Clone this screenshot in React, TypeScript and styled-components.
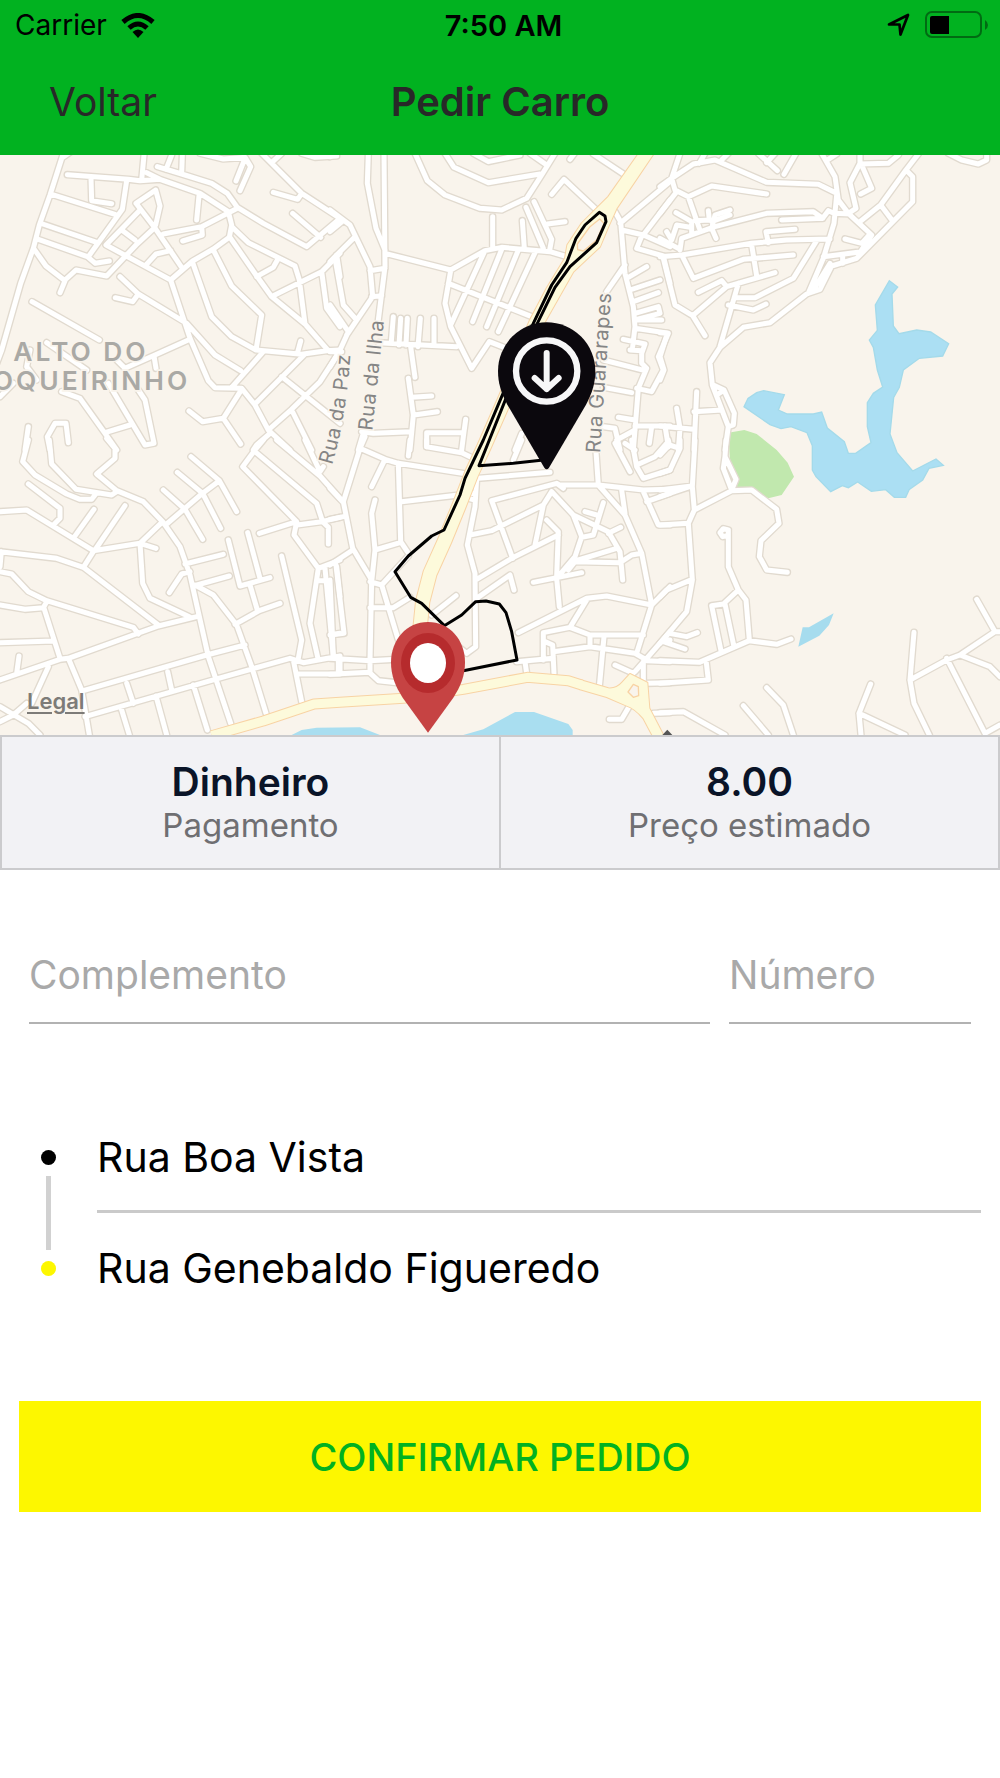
import React from "react";
import styled, { createGlobalStyle } from "styled-components";

const GlobalStyle = createGlobalStyle`
  *, *::before, *::after { box-sizing: border-box; }
  body {
    margin: 0;
    background: #fff;
    color: #000;
    font-family: Inter, "Liberation Sans", sans-serif;
  }
  button, input { font-family: inherit; }
`;

const Screen = styled.div`
  display: flex;
  flex-direction: column;
  min-height: 100vh;
`;

const Header = styled.header`
  background: #01b220;
`;

const StatusBar = styled.div`
  display: grid;
  grid-template-columns: 1fr auto 1fr;
  align-items: center;
  height: 50px;
  padding: 0 12px 0 15px;
  font-size: 28px;
`;

const StatusGroup = styled.div<{ $end?: boolean }>`
  display: flex;
  align-items: center;
  justify-content: ${(p) => (p.$end ? "flex-end" : "flex-start")};
  gap: 14px;
`;

const Clock = styled.time`
  padding-left: 4px;
  font-size: 29px;
  font-weight: 600;
`;

const NavBar = styled.nav`
  display: grid;
  grid-template-columns: 1fr auto 1fr;
  align-items: center;
  height: 105px;
  padding: 0 49px 2px;
  color: #282828;
`;

const BackButton = styled.button`
  justify-self: start;
  padding: 0;
  border: 0;
  background: none;
  color: inherit;
  font-size: 39px;
  line-height: 48px;
`;

const Title = styled.h1`
  margin: 0;
  font-size: 40px;
  font-weight: 600;
  line-height: 48px;
`;

const MapPanel = styled.section`
  position: relative;
  height: 580px;
  overflow: hidden;
  background: #f9f4ec;
`;

const MapSvg = styled.svg`
  display: block;
  width: 100%;
  height: 100%;
`;

const LegalLink = styled.a`
  position: absolute;
  left: 27px;
  bottom: 20px;
  color: #7d7b78;
  font-size: 22px;
  font-weight: 600;
  line-height: 28px;
  text-decoration: underline;
  text-underline-offset: 3px;
`;

const Summary = styled.dl`
  display: grid;
  grid-template-columns: 1fr 1fr;
  gap: 2px;
  margin: 0;
  border: 2px solid #cbcbcd;
  background: #cbcbcd;
`;

const SummaryItem = styled.div`
  display: flex;
  flex-direction: column-reverse;
  align-items: center;
  padding: 23px 16px 22px;
  background: #f2f2f5;
`;

const SummaryLabel = styled.dt`
  color: #6f6f72;
  font-size: 33px;
  line-height: 42px;
`;

const SummaryValue = styled.dd`
  margin: 0;
  color: #0a1428;
  font-size: 39px;
  font-weight: 600;
  line-height: 44px;
`;

const Form = styled.form`
  display: flex;
  flex-direction: column;
`;

const Fields = styled.div`
  display: grid;
  grid-template-columns: 681fr 242fr;
  gap: 19px;
  padding: 56px 29px 0;
`;

const TextInput = styled.input`
  display: block;
  width: 100%;
  height: 98px;
  padding: 0;
  border: 0;
  border-bottom: 2px solid #b2b2b2;
  border-radius: 0;
  outline: 0;
  background: transparent;
  color: #000;
  font-size: 39px;
  &::placeholder { color: #a9a9a9; opacity: 1; }
`;

const Route = styled.ol`
  display: grid;
  grid-template-columns: 97px 1fr;
  margin: 78px 19px 0 0;
  padding: 0;
  list-style: none;
`;

const Stop = styled.li`
  display: contents;
`;

const Marker = styled.span<{ $color: string; $link?: boolean }>`
  display: flex;
  flex-direction: column;
  align-items: center;
  padding-top: 48px;
  gap: 11px;
  &::before {
    content: "";
    flex: none;
    width: 15px;
    height: 15px;
    border-radius: 50%;
    background: ${(p) => p.$color};
  }
  &::after {
    content: "";
    display: ${(p) => (p.$link ? "block" : "none")};
    flex: none;
    width: 5px;
    height: 74px;
    margin-bottom: -38px;
    background: #d1d1d1;
  }
`;

const Street = styled.span<{ $divided?: boolean }>`
  height: 111px;
  border-bottom: ${(p) => (p.$divided ? "3px solid #cacaca" : "0")};
  font-size: 41px;
  line-height: 111px;
`;

const ConfirmButton = styled.button`
  height: 111px;
  margin: 77px 19px 0;
  border: 0;
  background: #fdf700;
  color: #01b220;
  font-size: 38px;
  font-weight: 500;
`;

/* Every map sheet is drawn in its own grid and placed by its origin. */
type Sheet = { x: number; y: number; roads: string };

const sheets: Sheet[] = [
  {
    x: 0,
    y: -15,
    roads: `M190 10L150 135L118 225L100 295L62 400L5 600L-10 640M188 22L220 0
M202 74L385 88L420 92L480 88L600 130L685 185M273 85L275 152L335 161M380 92L367 178L265 320
M155 133L345 193M128 222L290 277M115 268L262 320L286 340L328 333M103 298L138 348L195 392L180 428
M195 390L228 360L320 378L408 285L465 232M432 15L425 90M440 68L480 88
M472 50L545 72L635 100L682 130L712 172M515 15L498 58M547 15L545 70
M418 182L318 285L512 390L578 333L640 297L688 262L695 225L685 185
M467 225L480 168L467 120L408 160L462 230L545 352M368 242L405 270M435 348L468 312L512 302
M490 252L605 230L712 175M605 230L607 255L548 273M597 137L590 210
M600 10L670 27L735 22L752 50L720 122M735 25L708 93M712 172L790 220L920 290L1020 205
M785 10L905 130L1020 205M815 38L845 10M820 127L893 148L905 130M878 190L962 262M905 10L945 22L1010 18
M695 230L745 278L885 348L898 390L915 522M690 262L768 375L815 440L915 522L985 602M770 380L820 352L835 325
M820 437L965 365L1020 310M965 365L980 475L1020 530M1010 315L1020 380
M512 390L570 565L625 692L645 713L725 715L765 765L805 840L870 900
M578 338L635 500L695 560L768 600L905 613L980 602L1020 600M640 300L695 408L785 495L768 600
M360 380L415 432L560 520L645 615L722 662M346 443L398 455L415 432M96 455L298 570
M570 568L465 615L375 655L350 630M462 618L468 655M790 605L695 712M892 610L902 573M912 615L765 762
M725 718L670 805L608 815L567 783M670 805L722 882M845 680L1020 820
M1015 610L960 695L875 778L805 840M875 780L935 900M810 850L770 885L760 900
M185 725L240 745L315 850L350 900M315 848L390 825M325 700L435 885L462 880L435 750L415 720
M85 830L75 900M150 900L142 860L165 820L198 820L205 878M0 740L40 700M90 600L80 650L110 690M140 578L260 660`,
  },
  {
    x: 990,
    y: -15,
    roads: `M0 20L20 10M115 10L112 100L138 235L165 300M162 10L165 350L145 510
M255 10L292 92L345 135L450 175L515 180L590 145L635 75L675 10M345 10L372 52L475 98L630 72
M430 10L475 35L570 15M600 10L650 45M720 28L732 12M790 12L885 75M665 133L702 88L800 180
M165 310L362 360L465 302L515 292L660 305L710 320M488 200L488 295M577 212L583 295M588 172L640 295
M612 155L665 268L658 305M652 222L705 215M362 362L345 460L362 530L425 655L478 575L530 595
M355 400L605 500M462 308L362 525M515 298L428 515M565 300L470 530M615 308L505 545
M145 578L380 590M190 500L184 575M212 505L207 585M232 505L228 585M271 505L264 590M312 505L312 582
M242 590L255 682M235 685L250 795L240 900M245 742L305 738M252 795L322 785M95 845L130 850L245 845M100 850L85 900
M290 890L290 848L400 848M407 808L400 860L395 900M0 180L60 225L120 350L128 440L50 555
M0 245L40 212M75 260L0 335M120 362L165 355M125 440L155 437M15 325L40 465L80 510
M0 465L55 545L30 600L0 650M0 605L35 605M575 850L555 900
M855 185L872 215L885 370L910 470L915 530L908 590M870 220L1020 95M875 240L940 255L1020 290M935 258L920 295L1000 318L1020 400
M940 255L1020 150M885 345L830 425M890 385L950 350M900 420L990 390M910 455L985 428
M915 490L985 470L990 490L920 508M920 510L995 510M915 535L1015 550L985 620L1000 660L965 725L920 715
M880 568L945 582L935 610M900 600L935 602L935 640L950 655L925 715L910 900M820 630L945 662M820 712L905 728
M865 802L915 810M915 828L1020 828M965 830L958 880M820 830L855 835L870 900M860 870L915 840M885 880L915 900`,
  },
  {
    x: 1980,
    y: -15,
    roads: `M60 10L35 85L45 120L85 140L118 235M0 110L35 85L100 42L165 30L320 97L475 103L530 130M118 40L135 10M185 30L205 10
M0 190L50 125M85 140L155 108L320 132M295 10L352 62M320 38L345 10M408 10L372 73
M485 10L525 80L535 150L565 190L635 255L605 300M505 28L530 12M600 10L600 40L570 98L588 175L565 190
M600 42L685 40L715 15M605 45L635 115L602 132M775 12L738 60L662 165L600 215
M738 60L758 80L758 155L590 325L515 348L480 418L440 432L330 518L250 532L180 592L150 638L157 705L205 830L195 900
M160 705L192 720L223 790L220 825L205 830M170 735L190 722M530 135L522 220L490 325L445 430M522 190L570 192
M60 300L65 265L165 230L320 190L460 185L488 205L505 182L522 190M365 210L488 205
M0 320L65 315L275 280L380 270L510 267M325 278L318 245L405 238M0 265L60 298
M65 315L100 385L250 328L400 315M275 285L290 378M470 272L400 385L285 443L225 443
M115 427L185 392L200 410M345 368L200 410L98 497L135 557M10 325L45 465L98 497M235 400L180 590M205 465L280 480L318 462
M490 320L605 305M548 320L548 340M510 340L460 420M555 267L605 280L625 258M662 165L698 213
M48 188L95 215L95 250M90 232L50 225L35 270L20 245M145 182L148 210L105 212M210 180L165 195L155 235L168 265M210 195L155 215
M0 548L22 550L0 620L12 660L0 690M110 725L102 900M102 785L185 780M50 775L60 835L55 900M0 828L100 838M15 828L25 890
M865 10L905 30L955 42L980 30L980 10`,
  },
  {
    x: 0,
    y: 855,
    roads: `M85 0L68 65L105 105L200 162L240 178L275 178L285 165M148 0L155 72L228 148L335 165L350 155
M320 -5L345 25L345 55L290 102L350 152L430 185L488 245L540 320L570 405L625 650L692 850
M85 132L180 205L180 235L160 255M0 215L80 210L280 332L420 310L468 325M222 292L282 208M285 330L375 197
M280 335L250 382M0 335L170 355L250 382L475 555M4 335L0 380M420 310L488 245M500 252L605 162L658 122
M573 50L658 122L710 215M532 97L608 160L662 265M490 150L555 208L608 298M420 310L428 430L450 475L568 530
M0 395L35 402L85 455L140 482L400 562L415 582M0 495L75 508L130 503L140 485M132 505L180 655M0 608L160 603
M0 720L180 658L205 655L475 558L590 530M57 648L50 700M145 680L95 790M205 655L245 750L268 885
M250 752L620 645L735 615M255 830L645 718L870 655L910 668L1020 648M380 730L400 790M503 695L515 750
M362 800L388 885M468 768L500 885M580 735L622 870M555 372L670 343M570 395L545 402L508 458M580 438L688 408
M585 435L640 465L710 555L755 680L798 820M705 553L778 512L840 490M685 300L720 438L810 413M743 278L780 415M750 435L772 510
M778 280L890 245L892 255L965 245L1020 232M845 348L905 600L895 655M880 660L905 785M890 702L1020 702
M790 0L765 30L728 80L890 245L882 285L955 385L1020 360M765 35L950 190L968 245L985 262L985 312
M830 0L960 108L1020 175M915 0L960 95L970 80M955 385L930 550L955 660M975 385L1000 650M950 422L975 422
M1000 583L1020 580M1010 380L1020 470M1015 650L1015 700M0 800L85 850L120 885M0 845L40 825L80 790`,
  },
  {
    x: 990,
    y: 855,
    roads: `M105 -10L90 25L40 185L68 325L125 420L120 660M90 25L165 58L205 70L430 105M165 58L125 140M240 0L235 48M290 0L290 20L395 38L430 55
M205 70L212 305L232 335M215 185L430 160M135 180L125 220L135 330L125 425M135 330L210 308M0 145L38 185M0 238L40 230
M0 375L68 330M18 375L42 580L0 585M0 420L10 650M120 425L155 435L235 348M155 435L205 600M120 503L190 503L240 472
M0 655L120 662L200 658M0 703L118 697L145 722L200 728M30 655L30 700M120 662L120 697
M445 115L660 97M440 115L435 200L412 315L435 400L437 620L410 640L385 620M435 180L415 175M305 525L378 467
M420 285L485 272L640 195L665 155M440 418L545 355L685 285M548 355L485 182L680 130L700 145M690 135L805 135L940 150L1020 148
M798 35L805 135L885 225L935 340L965 495L920 640M640 195L615 315M665 155L730 225L755 290L735 350L680 415
M650 240L685 275L680 410M730 225L835 275L870 335L878 420M820 188L790 285L755 292M765 215L800 225M835 280L872 262
M715 390L735 365L870 368L905 345L935 340M745 360L860 325M610 427L755 398M680 415L688 500
M440 475L540 405L552 450M565 578L770 475L830 468L965 495L1020 440M770 480L720 562
M640 660L640 578L720 562L780 585L940 585M645 605L668 615L672 700M560 665L670 655M670 635L780 620L915 640L950 660
M780 590L780 620M822 590L808 740M585 665L590 700M875 150L885 220M940 155L985 255L1020 255M950 185L1020 160
M855 10L900 95M905 0L920 80L940 115L1020 90M920 75L975 50L1010 10M575 0L550 60
M855 675L910 700M915 695L950 655L1020 575M950 662L1020 665M1000 600L1020 600M940 665L940 720M950 730L1020 728M838 838L875 838L900 795M970 820L1020 818`,
  },
  {
    x: 1980,
    y: 855,
    roads: `M105 0L97 140L103 210L85 250L97 420L80 515L0 610M0 150L95 138L0 170M0 255L85 250
M103 210L215 152L275 150L350 208L357 250L303 302L298 350L320 390L382 397M198 0L195 50L228 118L215 150L190 85L195 50
M0 470L20 450L97 418M25 0L28 15L0 45M60 0L60 25L30 90L0 100M28 15L60 25
M205 270L205 380L235 450L258 480L268 600M205 286L188 290L180 278L190 266L205 270
M235 450L190 492L155 497L183 632M195 492L222 620M0 662L118 667L268 602L350 613L393 597M0 730L145 720L138 660
M28 580L80 590L112 578M10 605L75 627M0 818L70 815L195 885M250 797L325 885M320 743L370 795L400 885
M632 732L597 820L603 885M597 820L735 885M762 577L750 720L762 790L808 885
M750 720L860 660L900 645L1005 575L1020 575M860 655L975 880L1020 855M950 478L1005 575M900 645L990 680L1020 710`,
  },
];

const avenues = [
  { d: "M1588 550L1518 725L1450 880L1415 955L1376 1055L1335 1155L1290 1255L1268 1340L1258 1440", width: 40 },
  { d: "M635 1742L790 1698L942 1647L1020 1642L1210 1630L1390 1603L1582 1567L1705 1577L1745 1590", width: 27 },
];

const junctions = [
  "M1920 -10L1825 125L1785 165L1745 205L1702 270L1695 310L1640 400L1590 495L1550 590L1595 590L1635 500L1675 430L1720 350L1800 275L1825 215L1850 160L1965 -10Z",
  "M1740 1575L1825 1600Q1850 1602 1866 1583L1890 1557L1942 1583L1948 1660L1995 1750L1962 1750L1930 1690Q1905 1660 1880 1652L1820 1626L1740 1603Z",
];

const islands = [
  "M1799 192L1812 205L1790 255L1750 288L1733 284L1732 267L1770 215Z",
  "M1900 1588L1915 1595L1916 1622L1900 1627L1884 1611Z",
];

function Roads({ color, width }: { color: string; width: number }) {
  return (
    <g fill="none" stroke={color} strokeWidth={width} strokeLinecap="round" strokeLinejoin="round">
      {sheets.map((s) => (
        <path key={`${s.x}-${s.y}`} d={s.roads} transform={`translate(${s.x} ${s.y})`} />
      ))}
    </g>
  );
}

function Avenues({ color, extra }: { color: string; extra: number }) {
  return (
    <g stroke={color} strokeLinejoin="round">
      {avenues.map((a) => (
        <path key={a.d} d={a.d} fill="none" strokeWidth={a.width + extra} />
      ))}
      {junctions.map((d) => (
        <path key={d} d={d} fill={color} strokeWidth={extra} />
      ))}
    </g>
  );
}

const MapLabel = styled.text<{ $area?: boolean }>`
  fill: ${(p) => (p.$area ? "#aaa9a5" : "#858585")};
  stroke: #f9f4ec;
  stroke-width: 10px;
  paint-order: stroke;
  font-size: ${(p) => (p.$area ? "79px" : "60px")};
  font-weight: ${(p) => (p.$area ? 600 : 400)};
  letter-spacing: ${(p) => (p.$area ? "9px" : "2px")};
`;

function CityMap() {
  return (
    <MapSvg viewBox="0 0 3000 1740" preserveAspectRatio="xMidYMid slice" role="img" aria-label="Mapa">
      <g transform="translate(1980 -15)">
        <path
          fill="#c1e8ae"
          d="M205 848L253 840L290 852L350 900L383 938L402 980L365 1035L325 1045L275 1022L215 1015Z"
        />
        <path
          fill="#abdff3"
          stroke="#a4daea"
          strokeWidth="4"
          d="M688 392L713 411L696 432L700 528L717 551L770 540L812 546L866 581L848 618L778 625L730 660L718 712L701 742L690 852L711 908L758 963L828 927L850 946L807 955L788 990L748 1018L737 1042L703 1042L677 1019L634 1024L593 996L565 1013L547 1007L512 1025L468 980L457 960L457 887L441 848L393 830L363 836L330 824L252 770L264 745L290 728L311 722L373 734L355 780L382 792L460 792L485 786L502 834L553 875L565 910L587 910L633 878L622 830L622 758L640 730L668 711L652 660L640 592L628 570L652 541L646 465Z"
        />
        <path fill="#a6dcee" d="M428 1432L447 1432L521 1390L507 1425L478 1457L415 1490Z" />
      </g>
      <path
        fill="#a9def0"
        d="M875 1740L905 1725L950 1718L1080 1717L1140 1740ZM1390 1740L1450 1723L1545 1671L1602 1671L1705 1707L1718 1725L1718 1740Z"
      />
      <Roads color="#e1dacf" width={23} />
      <Roads color="#ffffff" width={15} />
      <Avenues color="#f8d3a4" extra={6} />
      <Avenues color="#fdfadb" extra={0} />
      {islands.map((d) => (
        <path key={d} d={d} fill="#f9f4ec" stroke="#f8d3a4" strokeWidth="4" strokeLinejoin="round" />
      ))}
      <path
        d="M1630 915L1540 925L1437 932L1468 855L1520 725L1612 505L1665 397L1710 335L1790 263L1818 200L1815 183L1798 172L1755 210L1728 250L1700 323L1655 390L1600 505L1505 725L1450 855L1395 970L1380 1020L1332 1125L1295 1143L1225 1203L1185 1250L1232 1327L1265 1345L1333 1412L1385 1380L1427 1340L1458 1338L1498 1347L1518 1373L1535 1430L1551 1515L1390 1547"
        fill="none"
        stroke="#000"
        strokeWidth="9"
        strokeLinejoin="round"
      />
      <MapLabel $area x="40" y="618">ALTO DO</MapLabel>
      <MapLabel $area x="-22" y="706">OQUEIRINHO</MapLabel>
      <path id="rua-da-paz" d="M996 930Q1040 790 1054 560" fill="none" />
      <MapLabel>
        <textPath href="#rua-da-paz">Rua da Paz</textPath>
      </MapLabel>
      <MapLabel transform="translate(1117 828) rotate(-84)">Rua da Ilha</MapLabel>
      <MapLabel transform="translate(1800 895) rotate(-86)">Rua Guararapes</MapLabel>
      <g transform="translate(1640 648)">
        <path
          fill="#0b080d"
          d="M0 -146A146 146 0 0 1 146 0C146 35 137 66 118 101L7 290Q0 299 -7 290L-118 101C-137 66 -146 35 -146 0A146 146 0 0 1 0 -146Z"
        />
        <circle r="92" fill="none" stroke="#f7f7f8" strokeWidth="19" />
        <path
          d="M0 -54V54M-36 21L0 54L36 21"
          fill="none"
          stroke="#f7f7f8"
          strokeWidth="18"
          strokeLinecap="round"
          strokeLinejoin="round"
        />
      </g>
      <g transform="translate(1284 1522)">
        <path
          fill="#c64343"
          d="M0 -121C64 -121 111 -68 111 0C111 40 98 72 76 106L0 211L-76 106C-98 72 -111 40 -111 0C-111 -68 -64 -121 0 -121Z"
        />
        <ellipse cy="2" rx="81" ry="90" fill="#b62b2d" />
        <ellipse cy="2" rx="54" ry="60" fill="#fff" />
      </g>
      <path d="M1987 1740L2002 1724L2017 1740Z" fill="#555" />
    </MapSvg>
  );
}

function WifiIcon() {
  return (
    <svg width="34" height="25" viewBox="0 0 34 25" aria-hidden="true">
      <path d="M2 9Q17 -4 32 9" fill="none" stroke="#000" strokeWidth="5" />
      <path d="M8 15Q17 7 26 15" fill="none" stroke="#000" strokeWidth="5" />
      <path d="M11.500 19Q17 14 22.500 19L17 25Z" />
    </svg>
  );
}

function LocationIcon() {
  return (
    <svg width="24" height="24" viewBox="0 0 24 24" aria-hidden="true">
      <path d="M2 11.500L21 2L13.500 21.500L12.500 11.500Z" fill="none" stroke="#000" strokeWidth="2.700" strokeLinejoin="round" />
    </svg>
  );
}

function BatteryIcon() {
  return (
    <svg width="63" height="28" viewBox="0 0 63 28" aria-hidden="true">
      <rect x="1" y="1" width="55" height="25" rx="6" fill="none" stroke="#016b13" strokeWidth="2" />
      <path d="M7 5H24V23H7Q5 23 5 21V7Q5 5 7 5Z" />
      <path d="M60 9Q63 11 63 14Q63 17 60 19Z" fill="#016b13" />
    </svg>
  );
}

const summary = [
  { label: "Pagamento", value: "Dinheiro" },
  { label: "Preço estimado", value: "8.00" },
];

const fields = [
  { id: "complemento", name: "Complemento" },
  { id: "numero", name: "Número" },
];

const stops = [
  { street: "Rua Boa Vista", color: "#000" },
  { street: "Rua Genebaldo Figueredo", color: "#fdf700" },
];

export default function App() {
  return (
    <>
      <GlobalStyle />
      <Screen>
        <Header>
          <StatusBar>
            <StatusGroup>
              <span>Carrier</span>
              <WifiIcon />
            </StatusGroup>
            <Clock>7:50 AM</Clock>
            <StatusGroup $end>
              <LocationIcon />
              <BatteryIcon />
            </StatusGroup>
          </StatusBar>
          <NavBar>
            <BackButton type="button">Voltar</BackButton>
            <Title>Pedir Carro</Title>
          </NavBar>
        </Header>
        <main>
          <MapPanel>
            <CityMap />
            <LegalLink href="#legal">Legal</LegalLink>
          </MapPanel>
          <Summary>
            {summary.map((item) => (
              <SummaryItem key={item.label}>
                <SummaryLabel>{item.label}</SummaryLabel>
                <SummaryValue>{item.value}</SummaryValue>
              </SummaryItem>
            ))}
          </Summary>
          <Form onSubmit={(e) => e.preventDefault()}>
            <Fields>
              {fields.map((f) => (
                <TextInput key={f.id} id={f.id} type="text" aria-label={f.name} placeholder={f.name} />
              ))}
            </Fields>
            <Route>
              {stops.map((s, i) => (
                <Stop key={s.street}>
                  <Marker $color={s.color} $link={i < stops.length - 1} />
                  <Street $divided={i < stops.length - 1}>{s.street}</Street>
                </Stop>
              ))}
            </Route>
            <ConfirmButton type="submit">CONFIRMAR PEDIDO</ConfirmButton>
          </Form>
        </main>
      </Screen>
    </>
  );
}
